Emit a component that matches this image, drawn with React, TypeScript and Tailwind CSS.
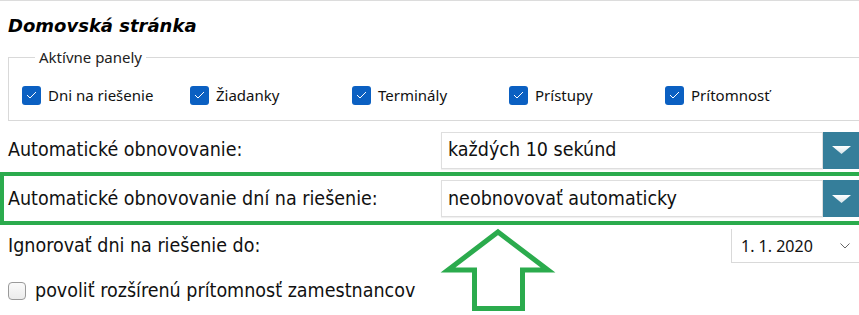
import React from "react";

const panels = [
  { label: "Dni na riešenie", width: "w-[168px]" },
  { label: "Žiadanky", width: "w-[162px]" },
  { label: "Terminály", width: "w-[157px]" },
  { label: "Prístupy", width: "w-[156px]" },
  { label: "Prítomnosť", width: "w-[156px]" },
];

function BlueCheck() {
  return (
    <span className="flex h-[19px] w-[19px] shrink-0 items-center justify-center rounded-[3px] bg-[#0b60c2]">
      <svg width="11" height="8" viewBox="0 0 11 8" fill="none">
        <polyline points="1,4 4,7 10,1" stroke="white" strokeWidth="1" />
      </svg>
    </span>
  );
}

function Select({ value }: { value: string }) {
  return (
    <div className="flex h-[37px] w-[418px]">
      <div className="flex flex-1 items-center border border-[#dedede] bg-white pl-[6px] shadow-[0_1px_1px_rgba(0,0,0,0.06)]">
        {value}
      </div>
      <div className="flex w-[36px] items-center justify-center bg-[#357e9a]">
        <svg width="19" height="8" viewBox="0 0 19 8">
          <defs>
            <linearGradient id="tri" x1="0" y1="0" x2="0" y2="1">
              <stop offset="0" stopColor="#ffffff" />
              <stop offset="1" stopColor="#d4e3ea" />
            </linearGradient>
          </defs>
          <polygon points="0,0 19,0 9.5,8" fill="url(#tri)" />
        </svg>
      </div>
    </div>
  );
}

export default function App() {
  return (
    <div
      className="relative h-[315px] w-[859px] overflow-hidden border-t border-[#dcdcdc] bg-white pt-[13px] text-[19.5px] text-[#111]"
      style={{ fontFamily: '"DejaVu Sans Condensed", "DejaVu Sans", Verdana, sans-serif', fontStretch: "condensed" }}
    >
      <h1
        className="pl-2 text-[18px] leading-6 font-bold italic text-black"
        style={{ fontFamily: '"DejaVu Sans", Verdana, sans-serif', fontStretch: "normal" }}
      >
        Domovská stránka
      </h1>

      <fieldset
        className="mt-[9px] ml-2 w-[900px] border border-[#d9d9d9] pb-[15px] pl-[13px]"
        style={{ fontFamily: '"Noto Sans", "Open Sans", sans-serif', fontStretch: "normal" }}
      >
        <legend className="ml-[13px] px-1 text-[15px] leading-5 text-[#222]">
          Aktívne panely
        </legend>
        <div className="mt-[18px] flex h-5 items-center text-[15px] text-[#111]">
          {panels.map((p) => (
            <label key={p.label} className={`flex items-center gap-[7px] ${p.width}`}>
              <BlueCheck />
              <span>{p.label}</span>
            </label>
          ))}
        </div>
      </fieldset>

      <div className="mt-[10px] flex h-[38px] items-center">
        <div className="w-[441px] pl-2">Automatické obnovovanie:</div>
        <Select value="každých 10 sekúnd" />
      </div>

      <div className="mt-[3px] flex w-[900px] items-center border-4 border-[#2bab4d] py-1">
        <div className="w-[437px] pl-1">Automatické obnovovanie dní na riešenie:</div>
        <Select value="neobnovovať automaticky" />
      </div>

      <div className="mt-[4px] flex h-[34px] items-center justify-between">
        <div className="pl-2">Ignorovať dni na riešenie do:</div>
        <div
          className="flex h-full w-[128px] items-center justify-between border-b border-l border-[#d9d9d9] pr-[9px] pl-[9px] text-[16px]"
          style={{ fontFamily: '"Noto Sans", "Open Sans", sans-serif', fontStretch: "normal" }}
        >
          <span>1. 1. 2020</span>
          <svg width="10" height="6" viewBox="0 0 10 6" fill="none">
            <polyline points="0.5,0.5 5,5 9.5,0.5" stroke="#666" strokeWidth="1" />
          </svg>
        </div>
      </div>

      <label className="mt-[16px] flex h-[24px] items-center gap-[9px] pl-2">
        <span className="h-[18px] w-[18px] shrink-0 rounded-[4px] border border-[#9a9a9a] bg-gradient-to-b from-[#fafafa] to-[#ececec]" />
        <span>povoliť rozšírenú prítomnosť zamestnancov</span>
      </label>

      <svg
        className="pointer-events-none absolute top-0 left-0"
        width="859"
        height="315"
        viewBox="0 0 859 315"
        fill="none"
      >
        <polygon
          points="498,231 548,269 522.5,269 522.5,307.5 474.5,307.5 474.5,269 448,269"
          stroke="#2bab4d"
          strokeWidth="5"
          strokeLinejoin="miter"
        />
      </svg>
    </div>
  );
}
